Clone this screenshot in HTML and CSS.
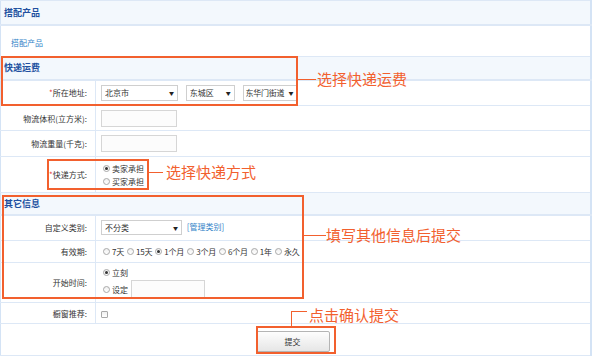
FILE: index.html
```html
<!DOCTYPE html>
<html lang="zh-CN">
<head>
    <meta charset="UTF-8">
    <title>发布商品 - 快递运费</title>
    <link rel="stylesheet" href="styles.css">
</head>
<body>
    <div class="page">
        <table class="form">
            <tr class="head row-1"><td colspan="2">搭配产品</td></tr>
            <tr class="row-2"><td colspan="2" class="link-cell"><a href="#">搭配产品</a></td></tr>
            <tr class="head row-3"><td colspan="2">快递运费</td></tr>
            <tr class="row-4">
                <td class="label"><i>*</i>所在地址:</td>
                <td class="field">
                    <span class="select w-city"><select><option>北京市</option></select></span>
                    <span class="select w-area"><select><option>东城区</option></select></span>
                    <span class="select w-street"><select><option>东华门街道</option></select></span>
                </td>
            </tr>
            <tr class="row-5">
                <td class="label">物流体积(立方米):</td>
                <td class="field"><input type="text" class="text"></td>
            </tr>
            <tr class="row-6">
                <td class="label">物流重量(千克):</td>
                <td class="field"><input type="text" class="text"></td>
            </tr>
            <tr class="row-7">
                <td class="label"><i>*</i>快递方式:</td>
                <td class="field">
                    <div class="stack">
                        <label class="opt"><input type="radio" name="ship" checked>卖家承担</label>
                        <label class="opt"><input type="radio" name="ship">买家承担</label>
                    </div>
                </td>
            </tr>
            <tr class="head row-8"><td colspan="2">其它信息</td></tr>
            <tr class="row-9">
                <td class="label">自定义类别:</td>
                <td class="field">
                    <span class="select w-cat"><select><option>不分类</option></select></span>
                    <a href="#" class="manage">[管理类别]</a>
                </td>
            </tr>
            <tr class="row-10">
                <td class="label">有效期:</td>
                <td class="field">
                    <div class="inline">
                        <label class="opt"><input type="radio" name="term">7天</label>
                        <label class="opt"><input type="radio" name="term">15天</label>
                        <label class="opt"><input type="radio" name="term" checked>1个月</label>
                        <label class="opt"><input type="radio" name="term">3个月</label>
                        <label class="opt"><input type="radio" name="term">6个月</label>
                        <label class="opt"><input type="radio" name="term">1年</label>
                        <label class="opt"><input type="radio" name="term">永久</label>
                    </div>
                </td>
            </tr>
            <tr class="row-11">
                <td class="label">开始时间:</td>
                <td class="field">
                    <div class="stack">
                        <label class="opt"><input type="radio" name="start" checked>立刻</label>
                        <label class="opt"><input type="radio" name="start">设定<input type="text" class="text date"></label>
                    </div>
                </td>
            </tr>
            <tr class="row-12">
                <td class="label">橱窗推荐:</td>
                <td class="field"><input type="checkbox" class="check"></td>
            </tr>
            <tr class="row-13">
                <td colspan="2" class="submit-cell"><button type="button" class="submit">提交</button></td>
            </tr>
        </table>

        <!-- annotations -->
        <div class="mark m1"></div>
        <div class="lead l1"></div>
        <div class="note n1">选择快递运费</div>

        <div class="mark m2"></div>
        <div class="lead l2"></div>
        <div class="note n2">选择快递方式</div>

        <div class="mark m3"></div>
        <div class="lead l3"></div>
        <div class="note n3">填写其他信息后提交</div>

        <div class="mark m4"></div>
        <div class="lead l4v"></div>
        <div class="lead l4h"></div>
        <div class="note n4">点击确认提交</div>
    </div>
</body>
</html>
```

FILE: styles.css
```css
* {
    margin: 0;
    padding: 0;
    box-sizing: border-box;
}

body {
    font-family: "Noto Sans CJK SC", "DejaVu Sans", sans-serif;
    font-size: 8px;
    color: #333;
    background: #fff;
}

.page {
    position: relative;
    width: 600px;
    height: 360px;
}

.form {
    width: 592px;
    border-collapse: collapse;
    border: 1px solid #d4e3f5;
    border-right-width: 2px;
}

.form td {
    border-top: 1px solid #dde8f6;
    border-bottom: 1px solid #dde8f6;
    vertical-align: middle;
}

.head td {
    background: #f3f8fd;
    color: #2150a0;
    font-weight: bold;
    font-size: 9px;
    padding-left: 3px;
    border-bottom: 2px solid #dde8f6;
}

.row-1 { height: 24px; }
.row-2 { height: 32px; }
.row-3 { height: 23px; }
.row-4 { height: 26px; }
.row-5 { height: 25px; }
.row-6 { height: 26px; }
.row-7 { height: 36px; }
.row-8 { height: 22px; }
.row-9 { height: 26px; }
.row-10 { height: 22px; }
.row-11 { height: 40px; }
.row-12 { height: 21px; }
.row-13 { height: 32px; }

.link-cell {
    padding-left: 10px;
    padding-top: 3px;
}

.link-cell a,
.manage {
    color: #3283c8;
    text-decoration: none;
    font-size: 8px;
}

.label {
    width: 95px;
    text-align: right;
    padding-right: 8px;
    border-right: 1px solid #dde8f6;
    white-space: nowrap;
}

.label i {
    font-style: normal;
    color: #e8403c;
}

.field {
    padding-left: 5px;
}

.select {
    position: relative;
    display: inline-block;
    vertical-align: middle;
    margin-right: 3px;
}

.select select {
    appearance: none;
    -webkit-appearance: none;
    width: 100%;
    height: 16px;
    border: 1px solid #cfcfcf;
    background: #fff;
    font-family: inherit;
    font-size: 8px;
    color: #333;
    padding-left: 3px;
}

.select::after {
    content: "▼";
    position: absolute;
    right: 4px;
    top: 4px;
    font-size: 5px;
    color: #222;
    pointer-events: none;
}

.w-city { width: 77px; }
.w-area { width: 49px; margin-left: 3px; }
.w-street { width: 55px; margin-left: 3px; }
.w-street select { padding-left: 2px; letter-spacing: -0.3px; }
.w-cat { width: 81px; }
.w-cat select { height: 15px; }

.text {
    width: 76px;
    height: 17px;
    border: 1px solid #d6d6d6;
    background: #fcfcfc;
    vertical-align: middle;
}

.text.date {
    width: 74px;
    height: 18px;
    margin-left: 1px;
}

.stack {
    display: flex;
    flex-direction: column;
    gap: 2px;
    padding-left: 2px;
}

.inline {
    display: flex;
    align-items: center;
    gap: 3px;
    padding-left: 2px;
    white-space: nowrap;
    letter-spacing: -0.2px;
}

.opt {
    display: inline-flex;
    align-items: center;
    gap: 2px;
    white-space: nowrap;
}

.opt input[type="radio"] {
    appearance: none;
    -webkit-appearance: none;
    width: 7px;
    height: 7px;
    border: 1px solid #a9a9a9;
    border-radius: 50%;
    background: linear-gradient(#f0f0f0, #fff);
    position: relative;
}

.opt input[type="radio"]:checked::after {
    content: "";
    position: absolute;
    left: 1px;
    top: 1px;
    width: 3px;
    height: 3px;
    border-radius: 50%;
    background: #333;
}

.check {
    appearance: none;
    -webkit-appearance: none;
    width: 7px;
    height: 7px;
    border: 1px solid #a9a9a9;
    border-radius: 1px;
    background: linear-gradient(#f0f0f0, #fff);
    vertical-align: middle;
}

.submit-cell {
    text-align: center;
    padding-right: 6px;
}

.submit {
    width: 74px;
    height: 21px;
    border: 1px solid #b4b4b4;
    border-radius: 2px;
    background: linear-gradient(#fdfdfd, #e6e6e6);
    font-family: inherit;
    font-size: 8px;
    color: #333;
    margin-top: 3px;
}

/* annotations */
.mark {
    position: absolute;
    border: 2px solid #f2602e;
}

.lead {
    position: absolute;
    background: #f2602e;
}

.note {
    position: absolute;
    color: #f2602e;
    font-size: 15px;
    line-height: 18px;
    white-space: nowrap;
}

.m1 { left: 1px; top: 56px; width: 297px; height: 50px; }
.l1 { left: 298px; top: 79px; width: 18px; height: 1px; }
.n1 { left: 317px; top: 70px; }

.m2 { left: 47px; top: 159px; width: 102px; height: 31px; }
.l2 { left: 149px; top: 172px; width: 14px; height: 1px; }
.n2 { left: 166px; top: 163px; }

.m3 { left: 2px; top: 195px; width: 302px; height: 104px; }
.l3 { left: 304px; top: 235px; width: 22px; height: 1px; }
.n3 { left: 326px; top: 226px; }

.m4 { left: 256px; top: 326px; width: 80px; height: 28px; }
.l4v { left: 291px; top: 311px; width: 1px; height: 15px; }
.l4h { left: 291px; top: 311px; width: 16px; height: 1px; }
.n4 { left: 309px; top: 306px; }
```
